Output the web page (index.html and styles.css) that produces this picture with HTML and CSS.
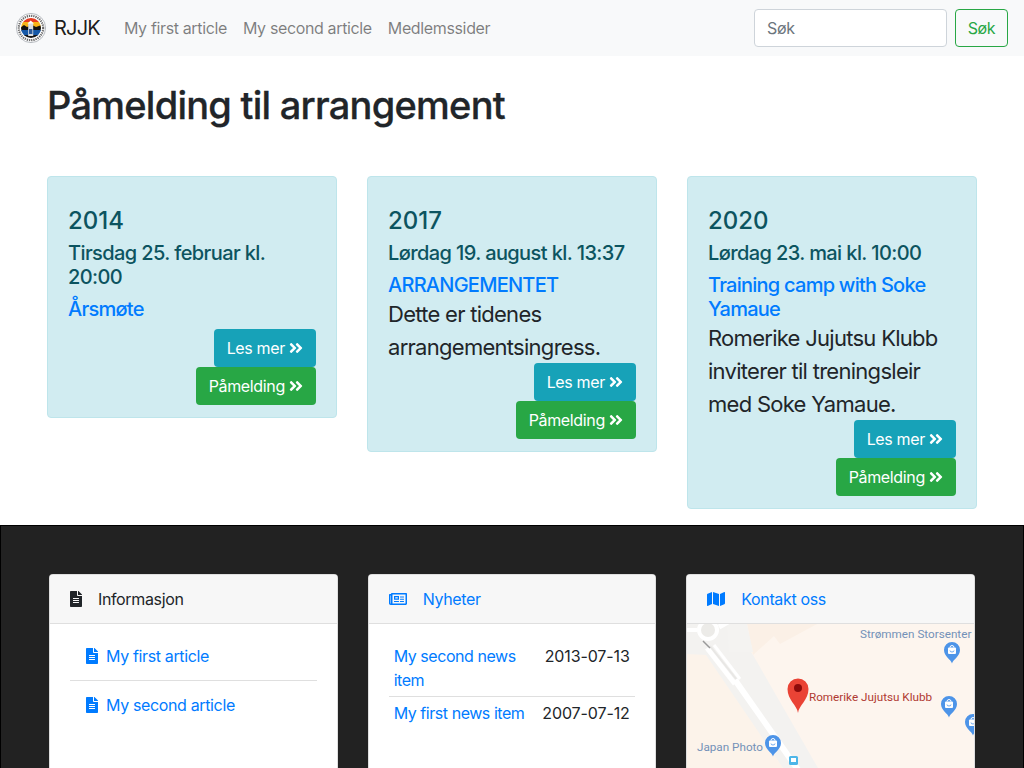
FILE: index.html
```html
<!DOCTYPE html>
<html lang="no">
<head>
<meta charset="utf-8">
<title>RJJK</title>
<link rel="stylesheet" href="styles.css">
</head>
<body>
<nav class="navbar">
  <a class="brand" href="#">
    <svg class="logo" viewBox="0 0 30 30" width="30" height="30">
      <circle cx="15" cy="15" r="14.6" fill="#fff" stroke="#9a9fa6" stroke-width=".7"/>
      <circle cx="15" cy="15" r="12.2" fill="none" stroke="#6a6a6a" stroke-width="2.2" stroke-dasharray="1.3 .9"/>
      <clipPath id="lc"><circle cx="15" cy="15" r="10"/></clipPath>
      <g clip-path="url(#lc)">
        <rect x="4" y="4" width="22" height="6" fill="#e5391f"/>
        <rect x="4" y="9" width="22" height="6" fill="#f7b316"/>
        <path d="M4 15l4-3 3 2 5-2 4 2 6-2v6H4z" fill="#111"/>
        <rect x="4" y="17" width="22" height="6" fill="#1659a8"/>
        <rect x="4" y="22" width="22" height="4" fill="#161616"/>
      </g>
      <rect x="12.200" y="10" width="5" height="13" fill="#d9dde2"/>
      <rect x="13" y="16" width="3.400" height="5" fill="#2a5a9a"/>
      <path d="M11.500 10.500l3.200-3 3.200 3z" fill="#fff"/>
    </svg>
    <span>RJJK</span>
  </a>
  <ul class="nav-links">
    <li><a href="#">My first article</a></li>
    <li><a href="#">My second article</a></li>
    <li><a href="#">Medlemssider</a></li>
  </ul>
  <form class="search">
    <input class="search-input" type="text" placeholder="Søk">
    <button class="search-btn" type="button">Søk</button>
  </form>
</nav>

<main class="main">
  <h1 class="page-title">Påmelding til arrangement</h1>
  <div class="events">
    <article class="event">
      <h3 class="event-year">2014</h3>
      <h5 class="event-date">Tirsdag 25. februar kl. 20:00</h5>
      <h5 class="event-title event-title-only"><a href="#">Årsmøte</a></h5>
      <div class="event-actions">
        <a class="btn btn-info" href="#">Les mer <svg class="chev" viewBox="0 0 448 512"><use href="#dbl"/></svg></a>
        <a class="btn btn-success" href="#">Påmelding <svg class="chev" viewBox="0 0 448 512"><use href="#dbl"/></svg></a>
      </div>
    </article>
    <article class="event">
      <h3 class="event-year">2017</h3>
      <h5 class="event-date">Lørdag 19. august kl. 13:37</h5>
      <h5 class="event-title"><a href="#">ARRANGEMENTET</a></h5>
      <p class="event-lead">Dette er tidenes arrangementsingress.</p>
      <div class="event-actions">
        <a class="btn btn-info" href="#">Les mer <svg class="chev" viewBox="0 0 448 512"><use href="#dbl"/></svg></a>
        <a class="btn btn-success" href="#">Påmelding <svg class="chev" viewBox="0 0 448 512"><use href="#dbl"/></svg></a>
      </div>
    </article>
    <article class="event">
      <h3 class="event-year">2020</h3>
      <h5 class="event-date">Lørdag 23. mai kl. 10:00</h5>
      <h5 class="event-title"><a href="#">Training camp with Soke Yamaue</a></h5>
      <p class="event-lead">Romerike Jujutsu Klubb inviterer til treningsleir med Soke Yamaue.</p>
      <div class="event-actions">
        <a class="btn btn-info" href="#">Les mer <svg class="chev" viewBox="0 0 448 512"><use href="#dbl"/></svg></a>
        <a class="btn btn-success" href="#">Påmelding <svg class="chev" viewBox="0 0 448 512"><use href="#dbl"/></svg></a>
      </div>
    </article>
  </div>
</main>

<footer class="footer">
  <section class="panel">
    <header class="panel-head">
      <svg class="head-icon" viewBox="0 0 384 512"><use href="#file"/></svg>
      <span>Informasjon</span>
    </header>
    <ul class="article-list">
      <li><a href="#"><svg class="item-icon" viewBox="0 0 384 512"><use href="#file"/></svg>My first article</a></li>
      <li><a href="#"><svg class="item-icon" viewBox="0 0 384 512"><use href="#file"/></svg>My second article</a></li>
    </ul>
  </section>
  <section class="panel">
    <header class="panel-head panel-head-link">
      <svg class="head-icon head-icon-wide" viewBox="0 0 576 512"><path fill="currentColor" d="M552 64H88c-13.255 0-24 10.745-24 24v8H24c-13.255 0-24 10.745-24 24v272c0 30.928 25.072 56 56 56h472c26.51 0 48-21.49 48-48V88c0-13.255-10.745-24-24-24zM56 400a8 8 0 0 1-8-8V144h16v248a8 8 0 0 1-8 8zm472 0H111.48c.33-2.6.52-5.27.52-8V112h416v288zM172 280h136c6.627 0 12-5.373 12-12v-96c0-6.627-5.373-12-12-12H172c-6.627 0-12 5.373-12 12v96c0 6.627 5.373 12 12 12zm28-80h80v40h-80v-40zm-40 140v-8c0-6.627 5.373-12 12-12h136c6.627 0 12 5.373 12 12v8c0 6.627-5.373 12-12 12H172c-6.627 0-12-5.373-12-12zm192 0v-8c0-6.627 5.373-12 12-12h104c6.627 0 12 5.373 12 12v8c0 6.627-5.373 12-12 12H364c-6.627 0-12-5.373-12-12zm0-144v-8c0-6.627 5.373-12 12-12h104c6.627 0 12 5.373 12 12v8c0 6.627-5.373 12-12 12H364c-6.627 0-12-5.373-12-12zm0 72v-8c0-6.627 5.373-12 12-12h104c6.627 0 12 5.373 12 12v8c0 6.627-5.373 12-12 12H364c-6.627 0-12-5.373-12-12z"/></svg>
      <a href="#">Nyheter</a>
    </header>
    <table class="news">
      <tr><td class="news-name"><a href="#">My second news item</a></td><td class="news-date">2013-07-13</td></tr>
      <tr><td class="news-name"><a href="#">My first news item</a></td><td class="news-date">2007-07-12</td></tr>
    </table>
  </section>
  <section class="panel">
    <header class="panel-head panel-head-link">
      <svg class="head-icon head-icon-wide" viewBox="0 0 576 512"><path fill="currentColor" d="M0 117.66v346.32c0 11.32 11.43 19.06 21.94 14.86L160 416V32L20.12 87.95A32.006 32.006 0 0 0 0 117.66zM192 416l192 64V96L192 32v384zM554.06 33.16L416 96v384l139.88-55.95A31.996 31.996 0 0 0 576 394.34V48.02c0-11.32-11.43-19.06-21.94-14.86z"/></svg>
      <a href="#">Kontakt oss</a>
    </header>
    <svg class="map" viewBox="0 0 288 300" width="288" height="300">
      <defs>
        <g id="shop">
          <path d="M0 13.500c-1-4-8-7-8-13.500a8 8 0 0 1 16 0c0 6.500-7 9.500-8 13.500z" fill="#4d94e8"/>
          <path d="M-2 -2.500a2 2 0 0 1 4 0" fill="none" stroke="#fff" stroke-width="1"/>
          <rect x="-4" y="-2.500" width="8" height="6.500" rx="1" fill="#fff"/>
          <path d="M-2 0.500a2 1.500 0 0 0 4 0" fill="none" stroke="#4d94e8" stroke-width=".8"/>
        </g>
      </defs>
      <rect width="288" height="300" fill="#fdf5ee"/>
      <g class="map-base">
        <path d="M66 31L87 12 93 20 130 0H60L66 31z" fill="#fbf0e6"/>
        <path d="M0 30L19 27 96 144H0z" fill="#fcf3ea"/>
        <path d="M0 0H45L46 0 66 31 131 144H96L19 31 0 30z" fill="#f3f2f0"/>
        <path d="M40 0H60L66 28H42z" fill="#f4f3f1"/>
        <path d="M0 6H10" stroke="#fff" stroke-width="4"/>
        <path d="M32 3L48 -6" stroke="#fff" stroke-width="5"/>
        <circle cx="21" cy="6" r="11" fill="#fff"/>
        <circle cx="21" cy="6" r="7" fill="#ecebe8"/>
        <path d="M20 24L48 60" stroke="#fff" stroke-width="5" fill="none"/>
        <path d="M27 21L53 55" stroke="#fff" stroke-width="3" fill="none"/>
        <path d="M23 22L50 56" stroke="#e8e7e5" stroke-width="2" fill="none"/>
        <path d="M16 17L23 24" stroke="#999" stroke-width="1.500"/>
        <path d="M48 56L114 150" stroke="#fff" stroke-width="6" fill="none"/>
      </g>
      <text class="map-label" x="173" y="14">Strømmen Storsenter</text>
      <text class="map-label" x="10" y="127">Japan Photo</text>
      <text class="map-pin-label" x="122" y="77">Romerike Jujutsu Klubb</text>
      <path d="M111 89c-1-8-10.500-13-10.500-24a10.500 10.500 0 0 1 21 0c0 11-9.500 16-10.500 24z" fill="#ea4335"/>
      <circle cx="111" cy="64" r="4" fill="#8d0b0b"/>
      <use href="#shop" x="265" y="26"/>
      <use href="#shop" x="262" y="80"/>
      <use href="#shop" x="286" y="98"/>
      <use href="#shop" x="86" y="119"/>
      <rect x="102" y="132" width="9" height="9" rx="1.500" fill="#4db6e8"/>
      <rect x="104" y="134" width="5" height="4" fill="#fff"/>
    </svg>
  </section>
</footer>

<svg class="sprite" width="0" height="0">
  <defs>
    <path id="dbl" fill="currentColor" d="M224.300 273l-136 136c-9.400 9.400-24.600 9.400-33.900 0l-22.600-22.600c-9.400-9.400-9.400-24.600 0-33.900l96.400-96.400-96.400-96.400c-9.400-9.400-9.400-24.600 0-33.900L54.300 103c9.400-9.400 24.600-9.400 33.900 0l136 136c9.500 9.400 9.500 24.600.1 34zm192-34l-136-136c-9.400-9.400-24.600-9.400-33.900 0l-22.600 22.600c-9.400 9.400-9.400 24.600 0 33.900l96.400 96.400-96.400 96.400c-9.400 9.400-9.400 24.600 0 33.900l22.600 22.600c9.400 9.400 24.600 9.400 33.900 0l136-136c9.400-9.200 9.400-24.400 0-33.800z"/>
    <path id="file" fill="currentColor" d="M224 136V0H24C10.700 0 0 10.700 0 24v464c0 13.300 10.700 24 24 24h336c13.300 0 24-10.700 24-24V160H248c-13.200 0-24-10.800-24-24zm64 236c0 6.600-5.400 12-12 12H108c-6.600 0-12-5.400-12-12v-8c0-6.600 5.400-12 12-12h168c6.600 0 12 5.400 12 12v8zm0-64c0 6.600-5.400 12-12 12H108c-6.600 0-12-5.400-12-12v-8c0-6.600 5.400-12 12-12h168c6.600 0 12 5.400 12 12v8zm0-72v8c0 6.600-5.400 12-12 12H108c-6.600 0-12-5.400-12-12v-8c0-6.600 5.400-12 12-12h168c6.600 0 12 5.400 12 12zm96-114.100v6.100H256V0h6.100c6.400 0 12.500 2.500 17 7l97.900 98c4.500 4.500 7 10.600 7 16.900z"/>
  </defs>
</svg>
</body>
</html>
```

FILE: styles.css
```css
* { box-sizing: border-box; }
html, body { margin: 0; height: 768px; overflow: hidden; }
body {
  font-family: Inter, "Liberation Sans", sans-serif;
  font-size: 16px;
  line-height: 24px;
  color: #212529;
  background: #fff;
  letter-spacing: -.36px;
}
a { color: #007bff; text-decoration: none; }

.navbar {
  height: 56px;
  background: #f8f9fa;
  display: flex;
  align-items: center;
  padding: 0 16px;
}
.brand { display: flex; align-items: center; color: rgba(0,0,0,.9); font-size: 20px; gap: 8px; margin-right: 16px; letter-spacing: -.8px; }
.logo { display: block; filter: blur(.3px); }
.nav-links { display: flex; list-style: none; margin: 0 0 0 8px; padding: 0; gap: 16px; flex: 1; }
.nav-links a { color: rgba(0,0,0,.5); }
.search { display: flex; gap: 8px; }
.search-input {
  width: 193px; height: 38px;
  border: 1px solid #ced4da; border-radius: 4px;
  padding: 6px 12px;
  font: inherit; letter-spacing: inherit; color: #495057; background: #fff;
}
.search-input::placeholder { color: #6c757d; opacity: 1; }
.search-btn {
  height: 38px; width: 53px;
  border: 1px solid #28a745; border-radius: 4px;
  background: transparent; color: #28a745;
  font: inherit; letter-spacing: inherit; padding: 0;
}

.main { padding: 0 47px; }
.page-title { font-size: 38px; line-height: 43px; font-weight: 500; margin: 28px 0 49px; color: #212529; letter-spacing: -.75px; -webkit-text-stroke: .3px #212529; }
.events { display: grid; grid-template-columns: repeat(3, 1fr); gap: 30px; align-items: start; margin-bottom: 16px; }
.event {
  background: #d1ecf1; border: 1px solid #bee5eb; border-radius: 4px;
  padding: 29px 20px 12px; color: #0c5460;
}
.event-year { font-size: 24px; line-height: 29px; font-weight: 500; margin: 0 0 6px; letter-spacing: 0; }
.event-date { font-size: 20px; line-height: 24px; font-weight: 500; margin: 0 0 8px; letter-spacing: -.6px; }
.event-title { font-size: 20px; line-height: 24px; font-weight: 500; margin: 0; letter-spacing: -.75px; }
.event-title-only { margin-bottom: 8px; }
.event-lead { font-size: 22px; line-height: 33px; font-weight: 400; margin: 1px 0 -1px; color: #212529; letter-spacing: -.72px; }
.event-actions { display: flex; flex-direction: column; align-items: flex-end; }
.btn { height: 38px; display: inline-flex; align-items: center; padding: 0 13px; border-radius: 4px; color: #fff; white-space: pre; }
.btn-info { background: #17a2b8; }
.btn-success { background: #28a745; }
.chev { width: 14px; height: 16px; }

.footer {
  background: #222; border: 1px solid #000;
  padding: 48px;
  display: grid; grid-template-columns: repeat(3, 1fr); gap: 30px;
  align-items: stretch;
}
.panel { background: #fff; border: 1px solid rgba(0,0,0,.125); border-radius: 4px; min-height: 400px; overflow: hidden; }
.panel-head {
  height: 49px; background: #f7f7f7; border-bottom: 1px solid #dfdfdf;
  display: flex; align-items: center; padding: 0 20px; gap: 16px;
}
.head-icon { width: 12px; height: 16px; flex: none; }
.head-icon-wide { width: 18px; height: 16px; }
.panel-head-link { color: #007bff; }
.article-list { list-style: none; margin: 0; padding: 20px 20px 0; }
.article-list li { padding: 0 16px 12px; }
.article-list li + li { border-top: 1px solid #dfdfdf; padding-top: 12px; }
.item-icon { width: 12px; height: 16px; margin-right: 8px; vertical-align: -2px; }
.news { border-collapse: collapse; width: 246px; margin: 16px 20px 0; }
.news td { vertical-align: top; padding: 4px 5px; }
.news tr + tr td { border-top: 1px solid #dfdfdf; }
.news-name { width: 147px; letter-spacing: -.45px; }
.news-date { text-align: right; white-space: nowrap; letter-spacing: -.12px; }
.map { display: block; }
.map-base { filter: blur(.5px); }
.map-label { font-family: Roboto, sans-serif; font-size: 11.7px; fill: #7391b8; letter-spacing: 0; }
.map-pin-label { font-family: Roboto, sans-serif; font-size: 11.7px; fill: #b03a32; letter-spacing: 0; }
.sprite { position: absolute; }
```
